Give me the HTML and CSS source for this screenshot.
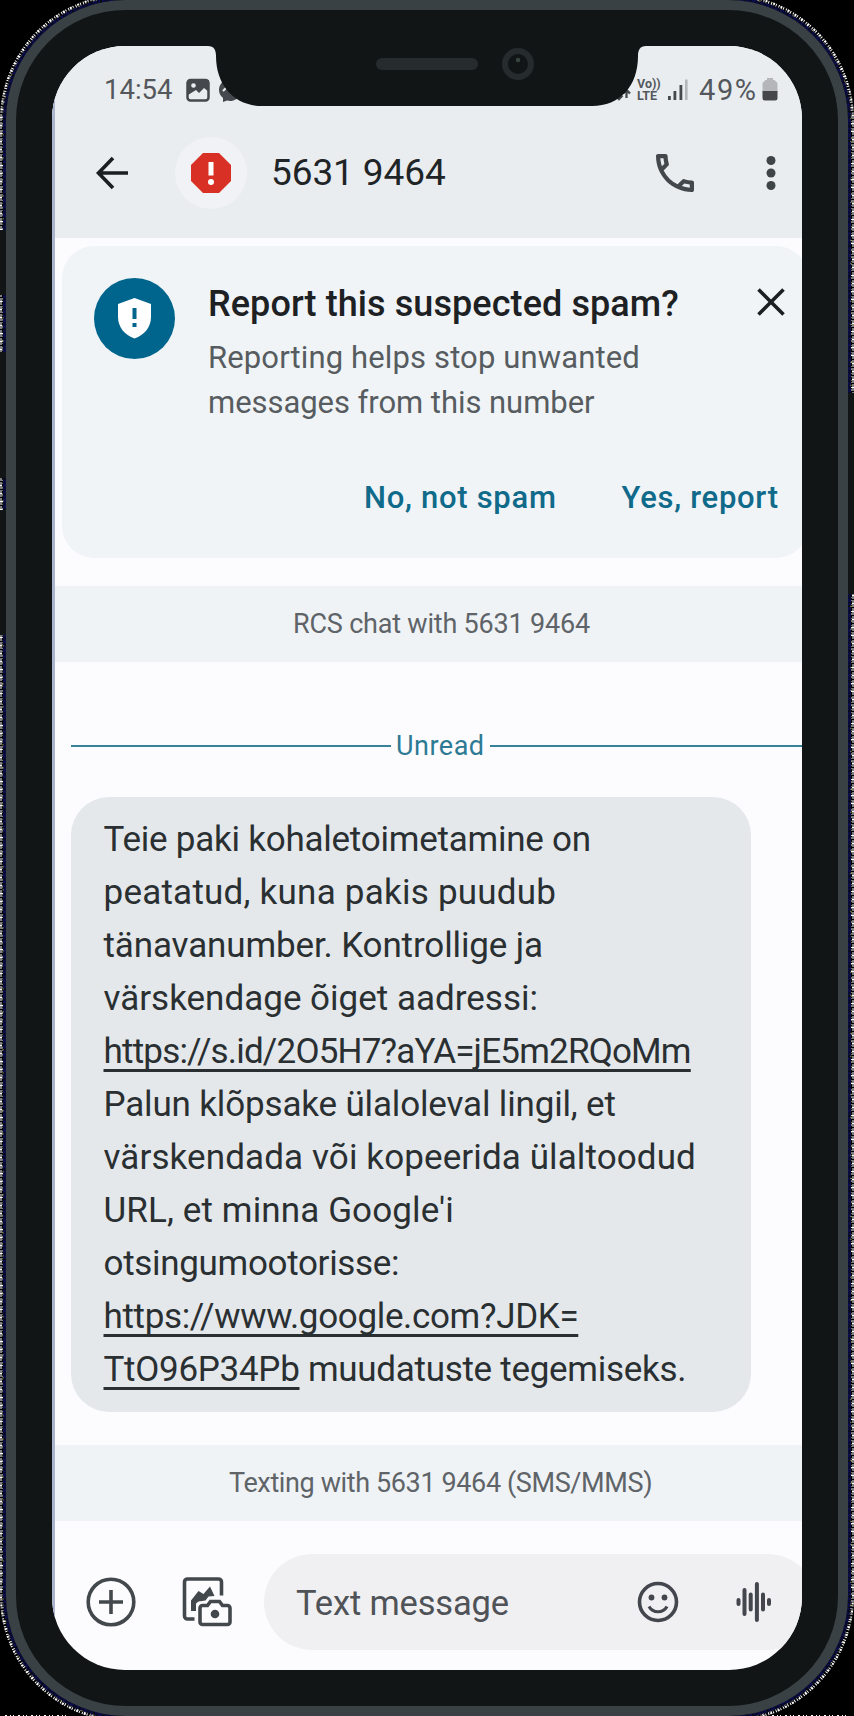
FILE: index.html
```
<!DOCTYPE html>
<html lang="et">
<head>
<meta charset="utf-8">
<title>Messages</title>
<link rel="stylesheet" href="styles.css">
</head>
<body>
<svg class="edge" viewBox="0 0 854 1716" fill="none">
  <rect x="4.5" y="-1.5" width="845" height="1719" rx="121.5" stroke="#0b0d4a" stroke-width="3"/>
  <rect x="4.5" y="-1.5" width="845" height="1719" rx="121.5" stroke="#070808" stroke-width="2" stroke-dasharray="1 2 2 3 1 1 1 4"/>
  <rect x="1.5" y="-4.5" width="851" height="1725" rx="124.5" stroke="#fff" stroke-width="3" stroke-dasharray="2 1 1 2 1 1"/>
  <rect x="2.5" y="-3.5" width="849" height="1723" rx="123.5" stroke="#000" stroke-width="1" stroke-dasharray="1 2 3 1"/>
  <rect x="3" y="-3" width="848" height="1722" rx="123" stroke="#d8d04a" stroke-width="1" stroke-dasharray="1 22 1 37"/>
  <path d="M5 1715.500H66M772 1715.500H850" stroke="#fff" stroke-dasharray="2 3 1 2 1 4"/>
  <path d="M0 230h8v65H0zM0 352h8v126H0zM0 510h8v125H0zM846 393h8v201h-8z" fill="#111516"/>
</svg>
<div class="phone">
  <div class="bezel">
    <main class="screen">
      <div class="status">
        <span class="clock">14:54</span>
        <svg class="st-left" width="60" height="26" viewBox="0 0 60 26">
          <rect x="1.500" y="3" width="21" height="20.500" rx="3" fill="#e9edf0" stroke="#45494d" stroke-width="2.500"/>
          <path d="M2 3h21v12l-5-4-5 5-3-3-8 5z" fill="#45494d"/>
          <circle cx="7.500" cy="8.500" r="2.300" fill="#e9edf0"/>
          <path d="M44 2a11 11 0 0 0-11 11c0 3 1.500 6 4 8v4l4-1.500A11 11 0 1 0 44 2z" fill="#45494d"/>
          <path d="M37 14l4-4 3 3 6-4" stroke="#e9edf0" stroke-width="2" fill="none"/>
        </svg>
        <span class="spacer"></span>
        <svg class="st-arrows" width="16" height="14" viewBox="0 0 16 14" fill="none" stroke="#45494d" stroke-width="2.300"><path d="M4 1v10M0.500 7.500L4 11 7.500 7.500M11.500 10V2M8 5.500L11.500 2 15 5.500"/></svg>
        <span class="volte"><span>Vo))</span><span>LTE</span></span>
        <svg class="signal" width="22" height="24" viewBox="0 0 22 24"><path d="M1 18h2.800v4H1zM6.500 13h2.800v9H6.500zM12.500 7h2.800v15h-2.800z" fill="#45494d"/><path d="M18 1.500h2.600V22H18z" fill="#b4b7ba"/></svg>
        <span class="percent">49%</span>
        <svg class="battery" width="16" height="24" viewBox="0 0 16 24"><path d="M5 1h6v2h1.500l3 3v9H0.500V6l3-3H5z" fill="#b4b6b9"/><path d="M0.500 14h15v7a2.500 2.500 0 0 1-2.500 2.500H3A2.500 2.500 0 0 1 0.500 21z" fill="#45474a"/></svg>
      </div>
      <header class="header">
        <svg class="back" width="34" height="34" viewBox="0 0 34 34" fill="none" stroke="#1b1f22" stroke-width="3.600"><path d="M18 2L3.500 17 18 32M3.500 17H33"/></svg>
        <span class="avatar"><svg width="40" height="40" viewBox="0 0 40 40"><path d="M12 0h16l12 12v16L28 40H12L0 28V12z" fill="#d93025"/><path d="M17.500 9h5v13.500h-5z" fill="#fff"/><circle cx="20" cy="29" r="3" fill="#fff"/></svg></span>
        <h1 class="number">5631 9464</h1>
        <svg class="call" width="38" height="38" viewBox="3 3 18 18" fill="#43484c"><path d="M6.540 5c.06.89.21 1.760.45 2.590l-1.200 1.200c-.41-1.200-.67-2.470-.76-3.790h1.510m9.860 12.020c.85.24 1.720.39 2.600.45v1.490c-1.320-.09-2.590-.35-3.800-.75l1.200-1.190M7.500 3H4c-.55 0-1 .45-1 1 0 9.390 7.610 17 17 17 .55 0 1-.45 1-1v-3.490c0-.55-.45-1-1-1-1.240 0-2.450-.2-3.570-.57a.84.84 0 0 0-.31-.05c-.26 0-.51.1-.71.29l-2.200 2.200a15.150 15.150 0 0 1-6.590-6.590l2.200-2.200c.28-.28.36-.67.25-1.020A11.360 11.360 0 0 1 8.500 4c0-.55-.45-1-1-1z"/></svg>
        <svg class="more" width="10" height="36" viewBox="0 0 10 36" fill="#3f4448"><circle cx="5" cy="5.500" r="4.500"/><circle cx="5" cy="18" r="4.500"/><circle cx="5" cy="30.500" r="4.500"/></svg>
      </header>
      <section class="card">
        <svg class="shield" width="81" height="81" viewBox="0 0 81 81"><circle cx="40.500" cy="40.500" r="40.500" fill="#00658c"/><path d="M40.500 20L57 26v13c0 10-6.500 18-16.500 21.500C30.500 57 24 49 24 39V26z" fill="#fff"/><path d="M38.500 30h4v11h-4zM38.500 45h4v4h-4z" fill="#00658c"/></svg>
        <div class="card-body">
          <h2 class="card-title">Report this suspected spam?</h2>
          <p class="card-text"><span class="c1">Reporting helps stop unwanted</span><br>messages from this number</p>
          <div class="actions"><span>No, not spam</span><span>Yes, report</span></div>
        </div>
        <svg class="close" width="28" height="28" viewBox="0 0 28 28" fill="none" stroke="#1b1f22" stroke-width="3.600"><path d="M1.500 1.500l25 25M26.500 1.500l-25 25"/></svg>
      </section>
      <div class="band rcs">RCS chat with 5631 9464</div>
      <div class="unread"><span>Unread</span></div>
      <div class="bubble">
        <span class="l1">Teie paki kohaletoimetamine on</span><br>
        <span class="l2">peatatud, kuna pakis puudub</span><br>
        <span class="l3">tänavanumber. Kontrollige ja</span><br>
        <span class="l4">värskendage õiget aadressi:</span><br>
        <span class="link l5">https://s.id/2O5H7?aYA=jE5m2RQoMm</span><br>
        <span class="l6">Palun klõpsake ülaloleval lingil, et</span><br>
        <span class="l7">värskendada või kopeerida ülaltoodud</span><br>
        <span class="l8">URL, et minna Google'i</span><br>
        <span class="l9">otsingumootorisse:</span><br>
        <span class="link l10">https://www.google.com?JDK=</span><br>
        <span class="l11"><span class="link">TtO96P34Pb</span> muudatuste tegemiseks.</span>
      </div>
      <div class="band sms">Texting with 5631 9464 (SMS/MMS)</div>
      <footer class="compose">
        <svg class="plus" width="50" height="50" viewBox="0 0 50 50" fill="none" stroke="#43484c" stroke-width="3.600"><circle cx="25" cy="25" r="22.800"/><path d="M25 13v24M13 25h24"/></svg>
        <svg class="gallery" width="50" height="50" viewBox="0 0 50 50" fill="none" stroke="#43484c" stroke-width="3.600">
          <path d="M12.500 42H5.500a3 3 0 0 1-3-3V5a3 3 0 0 1 3-3h31a3 3 0 0 1 3 3v13.500"/>
          <path d="M9 34V23.500L16.500 14l5 3L28 9.500 32.500 19l-6 .5-3 4-7 1-2.500 2V34z" fill="#43484c" stroke="none"/>
          <path d="M20.500 28.500h5l3-4h9l3 4h5a2.500 2.500 0 0 1 2.500 2.500v14a2.500 2.500 0 0 1-2.500 2.500h-25A2.500 2.500 0 0 1 18 45V31a2.500 2.500 0 0 1 2.500-2.500z"/>
          <circle cx="33" cy="37" r="4.300" fill="#43484c" stroke="none"/>
        </svg>
        <div class="field">
          <span class="hint">Text message</span>
          <svg class="emoji" width="42" height="42" viewBox="0 0 42 42" fill="none" stroke="#43464d" stroke-width="3.600"><circle cx="21" cy="21" r="18.500"/><path d="M12 25.500c4 7 14 7 18 0" stroke-width="3.200"/><circle cx="14.500" cy="16.500" r="2.900" fill="#43464d" stroke="none"/><circle cx="27.500" cy="16.500" r="2.900" fill="#43464d" stroke="none"/></svg>
          <svg class="wave" width="36" height="42" viewBox="0 0 36 42" stroke="#43464d" stroke-width="4" stroke-linecap="round"><path d="M2.500 19v4M8.500 9v24M14.700 13.500v15M20.900 3v36M27 13.500v15M33 19v4"/></svg>
        </div>
      </footer>
      <svg class="notch" width="438" height="60" viewBox="0 0 438 60"><path d="M0 0C6 0 8 4 8 10c0 30 19 50 46 50h330c28 0 46-20 46-50 0-6 2-10 8-10z" fill="#111516"/><rect x="168" y="12" width="102" height="12" rx="6" fill="#262b2e"/><circle cx="310" cy="18" r="13" fill="#111516" stroke="#262b2e" stroke-width="6"/><circle cx="310" cy="14" r="2.200" fill="#39453f"/></svg>
    </main>
  </div>
</div>
</body>
</html>
```
FILE: styles.css
```
* { box-sizing: border-box; }
body { margin: 0; width: 854px; height: 1716px; overflow: hidden; background: #000; font-family: Roboto, "Liberation Sans", sans-serif; position: relative; }
h1, h2, p { margin: 0; font-weight: 400; }
svg { display: block; flex: none; }
.edge { position: absolute; left: 0; top: 0; width: 854px; height: 1716px; }
.phone { position: relative; margin: 0 6px; height: 1716px; padding: 10px; background: #3a4144; border-radius: 120px; }
.bezel { height: 1696px; padding: 36px; background: #111516; border-radius: 110px; }
.screen { position: relative; height: 1624px; border-radius: 73px; overflow: hidden; background: #fcfcff; white-space: nowrap; }
.screen::before { content: ""; position: absolute; left: 0; top: 0; bottom: 0; width: 3px; background: #aab4cc; z-index: 1; }
.notch { position: absolute; left: 156px; top: 0; }

.status { display: flex; align-items: center; height: 87px; padding: 0 24px 0 52px; background: #e9edf0; color: #54585c; font-size: 27.5px; }
.st-left { margin-left: 14px; }
.spacer { flex: 1; }
.st-arrows { margin: 11px 6px 0 0; }
.volte { display: flex; flex-direction: column; width: 24px; margin-right: 6px; font-size: 12.5px; line-height: 12px; font-weight: 700; }
.signal { margin-right: 10px; }
.percent { width: 63px; font-size: 29px; letter-spacing: 1.600px; }
.battery { margin-top: -1px; }

.header { display: flex; align-items: center; height: 105px; padding: 0 26px 25px 43px; background: #e9edf0; }
.avatar { display: flex; align-items: center; justify-content: center; width: 72px; height: 72px; margin: 0 24px 0 46px; border-radius: 50%; background: #f1f2f5; }
.number { flex: 1; font-size: 37px; line-height: 50px; letter-spacing: -0.100px; color: #1f2427; }
.call { margin-right: 72px; }

.card { display: flex; align-items: flex-start; width: 746px; height: 312px; margin: 8px 0 28px 10px; border-radius: 32px; background: #f0f4f7; }
.shield { margin: 32px 32px 0; }
.card-body { flex: none; width: 600px; margin: 36px 0 0 1px; }
.card-title { font-size: 36px; line-height: 44px; font-weight: 500; letter-spacing: 0.080px; color: #1d2124; }
.card-text { margin-top: 9px; font-size: 31px; line-height: 45px; letter-spacing: -0.050px; color: #575c60; }
.c1 { letter-spacing: 0.130px; }
.actions { display: flex; gap: 65px; margin: 53px 0 0 156px; font-size: 31px; line-height: 40px; font-weight: 500; letter-spacing: 0.700px; color: #106a8a; }
.close { margin: 42px 0 0 -51px; }

.band { height: 76px; background: #eff3f6; color: #5f6468; font-size: 27px; line-height: 77px; }
.rcs { padding-left: 241px; letter-spacing: -0.200px; }
.sms { padding-left: 177px; letter-spacing: -0.380px; }

.unread { display: flex; align-items: center; gap: 5px; height: 40px; margin: 64px 0 31px 19px; color: #2d7a94; font-size: 27px; line-height: 40px; letter-spacing: 0.500px; }
.unread::before, .unread::after { content: ""; height: 2.500px; background: #37829a; }
.unread::before { width: 320px; }
.unread::after { flex: 1; }

.bubble { width: 680px; height: 615px; margin: 0 0 33px 19px; padding: 16px 33px 0 32.500px; border-radius: 38px; background: #e4e8eb; color: #2a2f32; font-size: 35px; line-height: 53px; }
.link { text-decoration: underline 2.700px; text-underline-offset: 5.500px; text-decoration-skip-ink: none; }
.l1 { letter-spacing: -0.240px; }
.l2 { letter-spacing: 0.230px; }
.l3 { letter-spacing: -0.130px; }
.l4 { letter-spacing: 0; }
.l5 { letter-spacing: -0.800px; }
.l6 { letter-spacing: -0.160px; }
.l7 { letter-spacing: 0.110px; }
.l8 { letter-spacing: 0.120px; }
.l9 { letter-spacing: -0.320px; }
.l10 { letter-spacing: -0.340px; }
.l11 { letter-spacing: -0.290px; }

.compose { display: flex; align-items: center; height: 96px; margin-top: 33px; padding-left: 34px; }
.gallery { margin: 0 32px 0 46px; }
.field { display: flex; flex: none; align-items: center; width: 552px; height: 96px; padding-left: 32px; border-radius: 48px; background: #f0f0f3; }
.hint { width: 341px; padding-top: 1px; font-size: 34.500px; color: #4f5357; letter-spacing: -0.150px; }
.wave { margin-left: 57px; }
```
